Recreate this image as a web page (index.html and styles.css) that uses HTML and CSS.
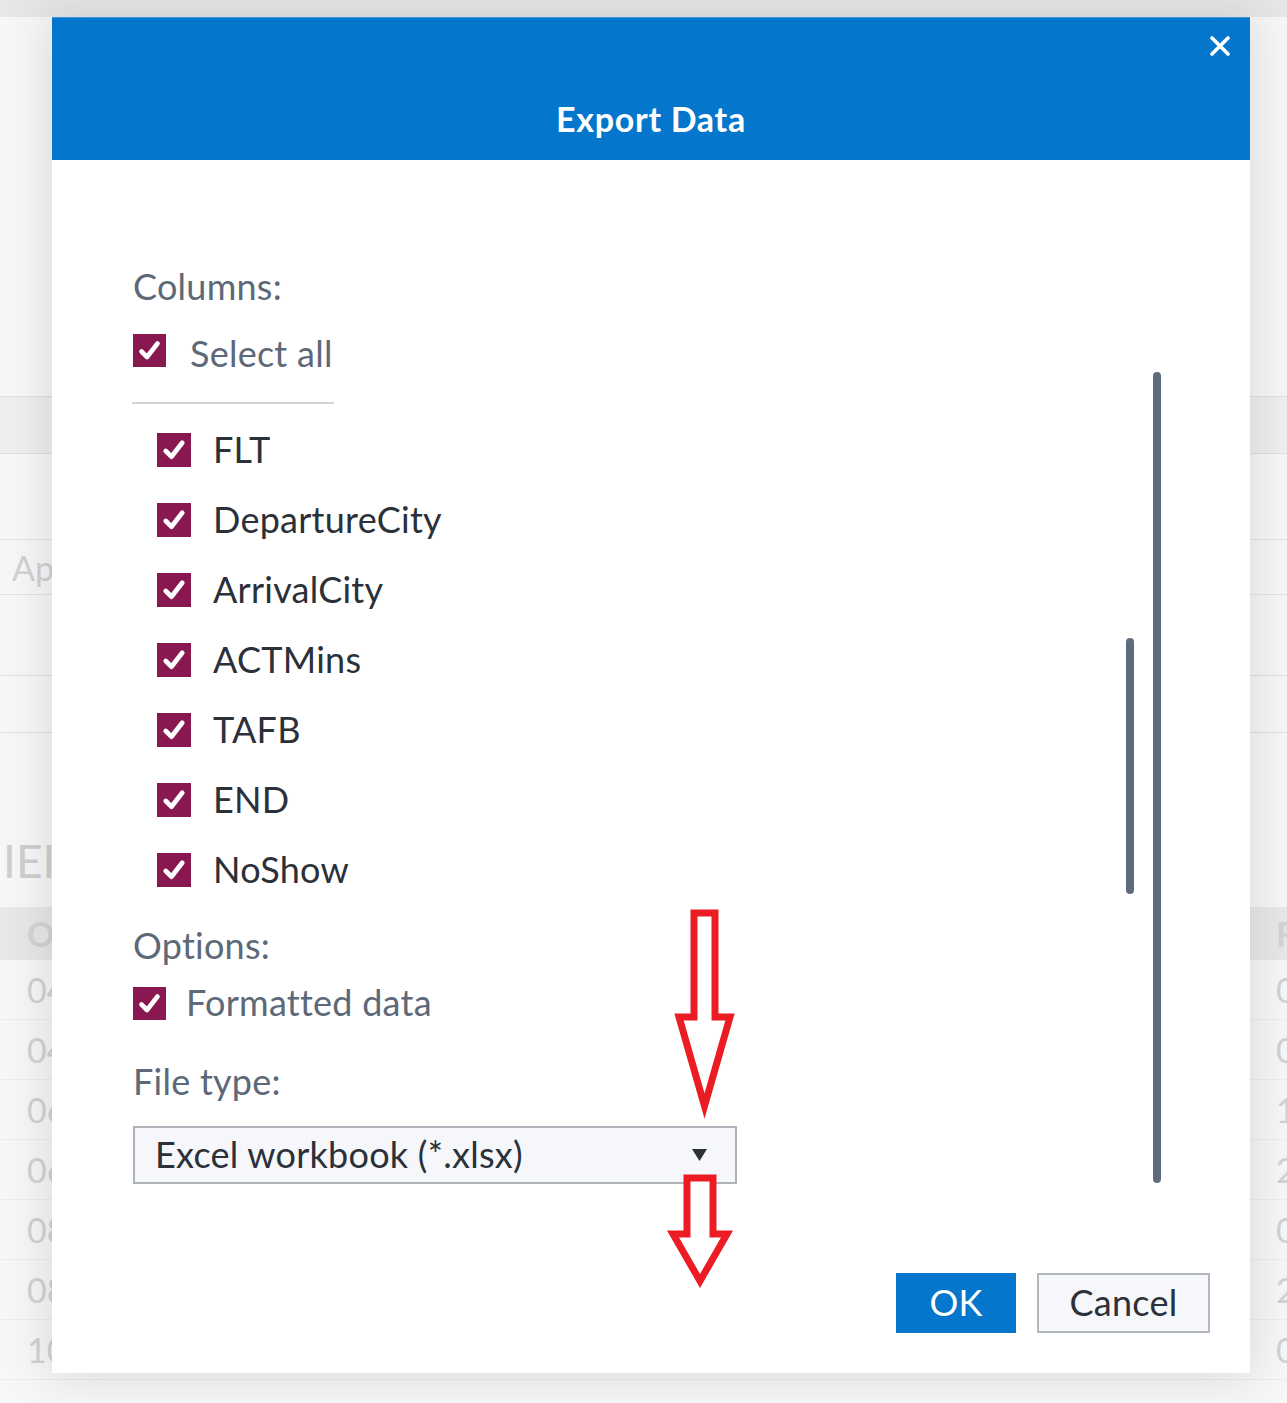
FILE: index.html
```html
<!DOCTYPE html>
<html lang="en">
<head>
<meta charset="utf-8">
<title>Export Data</title>
<link rel="stylesheet" href="styles.css">
</head>
<body>
<div class="bg">
  <div class="bg-top"></div>
  <div class="bg-band bg-band1"></div>
  <div class="bg-row bg-ap"><span>Ap</span><span></span></div>
  <div class="bg-band bg-band2"></div>
  <div class="bg-title"><span>IEI</span></div>
  <div class="bg-head"><span>O</span><span>F</span></div>
  <div class="bg-row bg-data"><span>04</span><span>0</span></div>
  <div class="bg-row bg-data"><span>04</span><span>0</span></div>
  <div class="bg-row bg-data"><span>06</span><span>1</span></div>
  <div class="bg-row bg-data"><span>06</span><span>2</span></div>
  <div class="bg-row bg-data"><span>08</span><span>0</span></div>
  <div class="bg-row bg-data"><span>08</span><span>2</span></div>
  <div class="bg-row bg-data"><span>10</span><span>0</span></div>
</div>

<div class="dialog">
  <div class="dlg-header">
    <h1 class="dlg-title">Export Data</h1>
    <button class="dlg-close" aria-label="Close">
      <svg width="20" height="20" viewBox="0 0 20 20"><path d="M2 2 L18 18 M18 2 L2 18" stroke="#fff" stroke-width="3.6" stroke-linecap="round"/></svg>
    </button>
  </div>
  <div class="dlg-body">
    <div class="label">Columns:</div>
    <div class="check-row select-all">
      <span class="cb"><svg viewBox="0 0 33 33"><path d="M8.5 17.5 L14 23 L24.5 9.5" fill="none" stroke="#fff" stroke-width="4.6" stroke-linecap="round" stroke-linejoin="round"/></svg></span>
      <span class="cb-text">Select all</span>
    </div>
    <div class="divider"></div>
    <div class="items">
      <div class="check-row item"><span class="cb"><svg viewBox="0 0 33 33"><path d="M8.5 17.5 L14 23 L24.5 9.5" fill="none" stroke="#fff" stroke-width="4.6" stroke-linecap="round" stroke-linejoin="round"/></svg></span><span class="cb-text">FLT</span></div>
      <div class="check-row item"><span class="cb"><svg viewBox="0 0 33 33"><path d="M8.5 17.5 L14 23 L24.5 9.5" fill="none" stroke="#fff" stroke-width="4.6" stroke-linecap="round" stroke-linejoin="round"/></svg></span><span class="cb-text">DepartureCity</span></div>
      <div class="check-row item"><span class="cb"><svg viewBox="0 0 33 33"><path d="M8.5 17.5 L14 23 L24.5 9.5" fill="none" stroke="#fff" stroke-width="4.6" stroke-linecap="round" stroke-linejoin="round"/></svg></span><span class="cb-text">ArrivalCity</span></div>
      <div class="check-row item"><span class="cb"><svg viewBox="0 0 33 33"><path d="M8.5 17.5 L14 23 L24.5 9.5" fill="none" stroke="#fff" stroke-width="4.6" stroke-linecap="round" stroke-linejoin="round"/></svg></span><span class="cb-text">ACTMins</span></div>
      <div class="check-row item"><span class="cb"><svg viewBox="0 0 33 33"><path d="M8.5 17.5 L14 23 L24.5 9.5" fill="none" stroke="#fff" stroke-width="4.6" stroke-linecap="round" stroke-linejoin="round"/></svg></span><span class="cb-text">TAFB</span></div>
      <div class="check-row item"><span class="cb"><svg viewBox="0 0 33 33"><path d="M8.5 17.5 L14 23 L24.5 9.5" fill="none" stroke="#fff" stroke-width="4.6" stroke-linecap="round" stroke-linejoin="round"/></svg></span><span class="cb-text">END</span></div>
      <div class="check-row item"><span class="cb"><svg viewBox="0 0 33 33"><path d="M8.5 17.5 L14 23 L24.5 9.5" fill="none" stroke="#fff" stroke-width="4.6" stroke-linecap="round" stroke-linejoin="round"/></svg></span><span class="cb-text">NoShow</span></div>
    </div>
    <div class="label options">Options:</div>
    <div class="check-row formatted">
      <span class="cb"><svg viewBox="0 0 33 33"><path d="M8.5 17.5 L14 23 L24.5 9.5" fill="none" stroke="#fff" stroke-width="4.6" stroke-linecap="round" stroke-linejoin="round"/></svg></span>
      <span class="cb-text">Formatted data</span>
    </div>
    <div class="label filetype">File type:</div>
    <div class="select">
      <span>Excel workbook (*.xlsx)</span>
      <svg class="caret" width="15" height="12" viewBox="0 0 15 12"><polygon points="0,0 15,0 7.5,12" fill="#2c3038"/></svg>
    </div>
    <div class="buttons">
      <button class="btn btn-ok">OK</button>
      <button class="btn btn-cancel">Cancel</button>
    </div>
  </div>
  <div class="scroll scroll-tall"></div>
  <div class="scroll scroll-short"></div>
</div>

<svg class="annot" width="1287" height="1403" viewBox="0 0 1287 1403">
  <path d="M694 913 L715 913 L715 1017 L730 1017 L704.5 1106 L679 1017 L694 1017 Z" fill="#fff" stroke="#ec1c24" stroke-width="7" stroke-linejoin="miter"/>
  <path d="M687 1178 L713 1178 L713 1234 L727 1234 L700 1281 L673 1234 L687 1234 Z" fill="#fff" stroke="#ec1c24" stroke-width="7" stroke-linejoin="miter"/>
</svg>
</body>
</html>
```

FILE: styles.css
```css
* { box-sizing: border-box; }

body {
  margin: 0;
  width: 1287px;
  height: 1403px;
  overflow: hidden;
  position: relative;
  background: #f7f7f8;
  font-family: Lato, "Open Sans", sans-serif;
}

/* background page (faded) */
.bg { width: 1287px; }
.bg-top { height: 17px; background: #e7e7e9; }
.bg-band { height: 58px; border-top: 1px solid #dfdfe1; border-bottom: 1px solid #dfdfe1; }
.bg-band1 { margin-top: 379px; background: #efeff1; }
.bg-band2 { margin-top: 80px; }
.bg-row {
  display: flex;
  justify-content: space-between;
  align-items: center;
  color: #d2d2d4;
  font-size: 34px;
  padding-left: 27px;
}
.bg-row span:last-child { width: 11px; overflow: hidden; white-space: nowrap; }
.bg-ap { margin-top: 85px; height: 56px; border-top: 1px solid #e4e4e6; border-bottom: 1px solid #e4e4e6; padding-left: 12px; }
.bg-title { margin-top: 98px; height: 58px; display: flex; align-items: center; padding-left: 3px; font-size: 46px; color: #cfcfd1; }
.bg-head {
  margin-top: 18px;
  height: 53px;
  background: #e8e8ea;
  display: flex;
  justify-content: space-between;
  align-items: center;
  padding-left: 27px;
  font-size: 34px;
  font-weight: 700;
  color: #d4d4d6;
}
.bg-head span:last-child { width: 11px; overflow: hidden; }
.bg-data { height: 60px; border-bottom: 1px solid #ededef; }

/* dialog */
.dialog {
  position: absolute;
  left: 52px;
  top: 17px;
  width: 1198px;
  height: 1356px;
  background: #fff;
  box-shadow: 0 0 45px 6px rgba(0, 0, 0, 0.11);
}
.dlg-header {
  height: 143px;
  background: #0477cc;
  display: flex;
  justify-content: center;
  align-items: center;
  padding-top: 58px;
  border-top: 1px solid #3f98dd;
}
.dlg-title {
  margin: 0;
  color: #fff;
  font-size: 34px;
  font-weight: 700;
  letter-spacing: 0.7px;
}
.dlg-close {
  position: absolute;
  top: 19px;
  left: 1158px;
  width: 20px;
  height: 20px;
  padding: 0;
  border: 0;
  background: none;
  display: flex;
}

.dlg-body {
  padding: 0 40px 0 81px;
  display: flex;
  flex-direction: column;
  font-size: 36px;
  letter-spacing: 0.25px;
}
.label {
  height: 40px;
  display: flex;
  align-items: center;
  padding-bottom: 3px;
  color: #5d6878;
  margin-top: 107px;
}
.check-row {
  display: flex;
  align-items: center;
}
.cb {
  width: 33px;
  height: 33px;
  background: #8a1850;
  display: flex;
  flex: none;
}
.cb svg { width: 100%; height: 100%; }
.cb-text { padding-bottom: 3px; }
.select-all { height: 41px; margin-top: 23px; gap: 24px; color: #5d6878; }
.select-all .cb-text { padding-bottom: 0; padding-top: 4px; }
.divider { width: 202px; height: 2px; background: #d3d5d8; margin: 31px 0 0 -1px; }
.items { margin-top: 11px; padding-left: 24px; }
.item { height: 70px; gap: 22px; color: #2b3039; }
.item .cb { width: 34px; height: 34px; }
.options { margin-top: 21px; }
.formatted { height: 41px; margin-top: 17px; gap: 20px; color: #5d6878; }
.filetype { margin-top: 38px; }
.select {
  margin-top: 24px;
  width: 604px;
  height: 58px;
  background: #f5f7fa;
  border: 2px solid #aeb3ba;
  display: flex;
  align-items: center;
  justify-content: space-between;
  padding: 0 28px 3px 20px;
  color: #2b3039;
}
.select .caret { margin-top: 3px; }
.buttons {
  margin-top: 89px;
  display: flex;
  justify-content: flex-end;
  gap: 21px;
}
.btn {
  height: 60px;
  font-family: Lato, "Open Sans", sans-serif;
  font-size: 36px;
  letter-spacing: 0.25px;
  padding: 0 0 3px;
  display: flex;
  align-items: center;
  justify-content: center;
}
.btn-ok { width: 120px; background: #0477cc; color: #fff; border: 0; }
.btn-cancel { width: 173px; background: #f5f7fa; color: #2b3039; border: 2px solid #b3b8bf; }

.scroll {
  position: absolute;
  width: 8px;
  border-radius: 4px;
  background: #5f6b7c;
}
.scroll-tall { left: 1101px; top: 355px; height: 811px; }
.scroll-short { left: 1074px; top: 621px; height: 256px; }

.annot { position: absolute; left: 0; top: 0; pointer-events: none; }
```
